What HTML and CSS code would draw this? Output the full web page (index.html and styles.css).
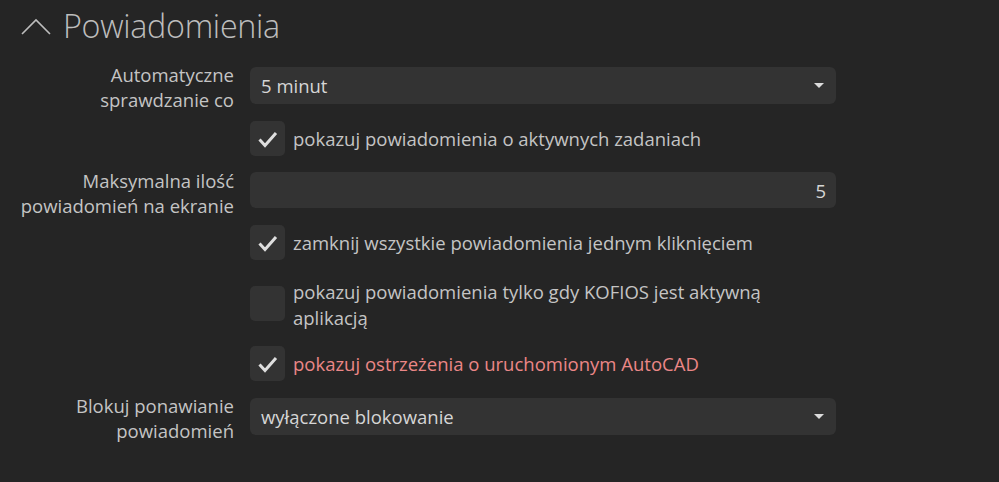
FILE: index.html
```html
<!DOCTYPE html>
<html lang="pl">
<head>
<meta charset="utf-8">
<link rel="stylesheet" href="styles.css">
</head>
<body>
<div class="panel">
  <div class="header">
    <svg class="chev" width="32" height="20" viewBox="0 0 32 20"><path d="M2 17 L16 3 L30 17" fill="none" stroke="#bdbdbd" stroke-width="1.6"/></svg>
    <span class="title">Powiadomienia</span>
  </div>
  <div class="form">
    <div class="label">Automatyczne<br>sprawdzanie co</div>
    <div class="field select"><span>5 minut</span><span class="arrow"></span></div>

    <div class="label"></div>
    <div class="check on"><span class="box"><svg viewBox="0 0 35 35" width="35" height="35"><path d="M9.5 18.5 L15 24.5 L26 12" fill="none" stroke="#dedede" stroke-width="3"/></svg></span><span class="ctext">pokazuj powiadomienia o aktywnych zadaniach</span></div>

    <div class="label">Maksymalna ilość<br>powiadomień na ekranie</div>
    <div class="field number"><span>5</span></div>

    <div class="label"></div>
    <div class="check on"><span class="box"><svg viewBox="0 0 35 35" width="35" height="35"><path d="M9.5 18.5 L15 24.5 L26 12" fill="none" stroke="#dedede" stroke-width="3"/></svg></span><span class="ctext">zamknij wszystkie powiadomienia jednym kliknięciem</span></div>

    <div class="label"></div>
    <div class="check multi"><span class="box"></span><span class="ctext">pokazuj powiadomienia tylko gdy KOFIOS jest aktywną aplikacją</span></div>

    <div class="label"></div>
    <div class="check on warn"><span class="box"><svg viewBox="0 0 35 35" width="35" height="35"><path d="M9.5 18.5 L15 24.5 L26 12" fill="none" stroke="#dedede" stroke-width="3"/></svg></span><span class="ctext">pokazuj ostrzeżenia o uruchomionym AutoCAD</span></div>

    <div class="label">Blokuj ponawianie<br>powiadomień</div>
    <div class="field select"><span>wyłączone blokowanie</span><span class="arrow"></span></div>
  </div>
</div>
</body>
</html>
```
FILE: styles.css
```css
html, body {
  margin: 0;
  padding: 0;
  background: #252525;
}
body {
  font-family: "Open Sans", "Noto Sans", sans-serif;
  color: #c4c4c4;
  width: 999px;
  height: 482px;
  overflow: hidden;
}
.header {
  display: flex;
  align-items: center;
  height: 50px;
  padding-left: 20px;
  gap: 11px;
}
.chev {
  display: block;
  margin-top: 4px;
}
.title {
  font-weight: 300;
  font-size: 32.3px;
  color: #bdbdbd;
  letter-spacing: -0.3px;
  line-height: 50px;
}
.form {
  display: grid;
  grid-template-columns: 234px 586px;
  column-gap: 16px;
  row-gap: 17px;
  margin-top: 17px;
}
.label {
  text-align: right;
  font-size: 18.5px;
  line-height: 25px;
  margin: -5px 0 -13px;
  color: #c4c4c4;
}
.field {
  height: 37px;
  background: #333333;
  border-radius: 6px;
  display: flex;
  align-items: center;
  font-size: 18.5px;
  color: #d6d6d6;
  padding: 0 12px 0 11px;
}
.select {
  justify-content: space-between;
}
.number {
  justify-content: flex-end;
  padding-right: 10px;
  height: 36px;
  margin-top: -1px;
}
.arrow {
  width: 0;
  height: 0;
  border-left: 5px solid transparent;
  border-right: 5px solid transparent;
  border-top: 5px solid #dcdcdc;
}
.check {
  display: flex;
  align-items: center;
  gap: 8px;
  font-size: 18.5px;
  line-height: 26px;
  color: #c4c4c4;
}
.box {
  width: 35px;
  height: 35px;
  flex: none;
  background: #333333;
  border-radius: 5px;
  display: block;
}
.box svg {
  display: block;
}
.check.multi {
  align-items: flex-start;
  margin-top: 9px;
}
.check.multi .ctext {
  margin-top: -7px;
  width: 500px;
}
.warn {
  margin-top: -2px;
}
.warn .ctext {
  color: #eb8787;
}
```
